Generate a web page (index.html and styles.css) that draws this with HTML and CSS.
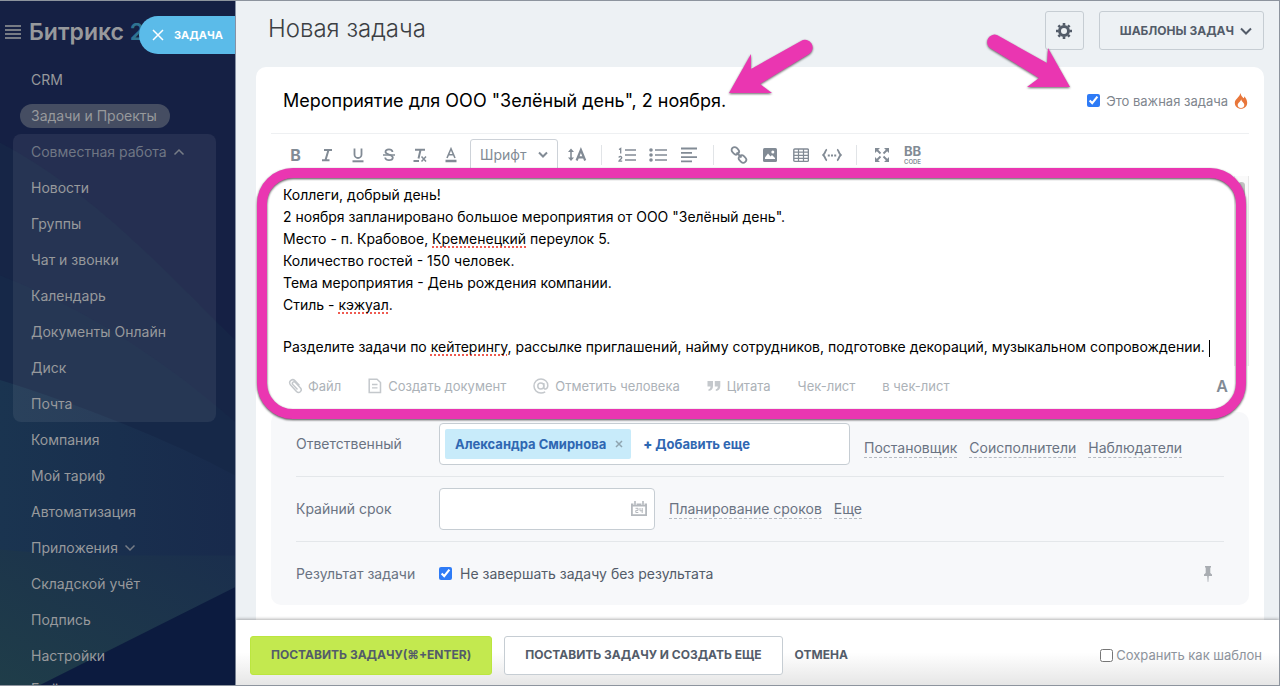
FILE: index.html
```html
<!DOCTYPE html>
<html lang="ru">
<head>
<meta charset="utf-8">
<title>Новая задача</title>
<link rel="stylesheet" href="styles.css">
</head>
<body>
<div class="app">
  <aside class="sidebar">
    <svg class="sidebar-art" viewBox="0 0 235 686" preserveAspectRatio="none" aria-hidden="true">
      <defs>
        <linearGradient id="teal" x1="0" y1="1" x2="1" y2="0"><stop offset="0" stop-color="#1f3d49"/><stop offset="1" stop-color="#1a2e4d"/></linearGradient>
        <linearGradient id="deep" x1="0" y1="0" x2="1" y2="0"><stop offset="0" stop-color="#1a3450"/><stop offset="1" stop-color="#182a4c"/></linearGradient>
      </defs>
      <rect width="235" height="686" fill="#152044"/>
      <path d="M0 142C90 190 160 265 235 340V686H0Z" fill="#162546"/>
      <path d="M0 275C90 310 170 365 235 422V686H0Z" fill="#162848"/>
      <path d="M0 380C80 405 170 440 235 476V686H0Z" fill="url(#deep)"/>
      <path d="M0 550C80 558 160 556 235 556V686H0Z" fill="url(#teal)"/>
      <path d="M235 588L40 686H235Z" fill="#0c1b3f"/>
    </svg>
    <div class="brand">
      <button class="burger" type="button" aria-label="Меню"><span></span><span></span><span></span><span></span></button>
      <span class="brand-name">Битрикс <span class="brand-num">24</span></span>
    </div>
    <nav class="menu">
      <a class="menu-item" href="#">CRM</a>
      <a class="menu-item" href="#"><span class="pill">Задачи и Проекты</span></a>
      <div class="menu-group">
        <a class="menu-item menu-head" href="#">Совместная работа <svg width="12" height="8" viewBox="0 0 12 8"><path d="M1.500 6.500L6 2L10.500 6.500"/></svg></a>
        <a class="menu-item" href="#">Новости</a>
        <a class="menu-item" href="#">Группы</a>
        <a class="menu-item" href="#">Чат и звонки</a>
        <a class="menu-item" href="#">Календарь</a>
        <a class="menu-item" href="#">Документы Онлайн</a>
        <a class="menu-item" href="#">Диск</a>
        <a class="menu-item" href="#">Почта</a>
      </div>
      <a class="menu-item" href="#">Компания</a>
      <a class="menu-item" href="#">Мой тариф</a>
      <a class="menu-item" href="#">Автоматизация</a>
      <a class="menu-item" href="#">Приложения <svg width="12" height="8" viewBox="0 0 12 8"><path d="M1.500 1.500L6 6L10.500 1.500"/></svg></a>
      <a class="menu-item" href="#">Складской учёт</a>
      <a class="menu-item" href="#">Подпись</a>
      <a class="menu-item" href="#">Настройки</a>
      <a class="menu-item menu-more" href="#">Ещё</a>
    </nav>
    <button class="slider-tab" type="button"><svg width="12" height="12" viewBox="0 0 12 12"><path d="M1 1L11 11M11 1L1 11"/></svg>ЗАДАЧА</button>
  </aside>

  <main class="main">
    <div class="scroll">
      <header class="head">
        <h1>Новая задача</h1>
        <button class="btn btn-gear" type="button" aria-label="Настройки">
          <svg width="18" height="18" viewBox="-9 -9 18 18"><circle r="4.500" fill="none" stroke="#535c69" stroke-width="3"/><path d="M0 -5.500V-8M0 5.500V8M-5.500 0H-8M5.500 0H8M-4 -4L-5.600 -5.600M4 4L5.600 5.600M-4 4L-5.600 5.600M4 -4L5.600 -5.600" stroke="#535c69" stroke-width="2.600"/></svg>
        </button>
        <button class="btn btn-templates" type="button">ШАБЛОНЫ ЗАДАЧ <svg width="12" height="8" viewBox="0 0 12 8"><path d="M1 1.500L6 6.500L11 1.500" fill="none" stroke="#535c69" stroke-width="2"/></svg></button>
      </header>

      <section class="card">
        <div class="title-row">
          <input class="title-input" type="text" aria-label="Название задачи" value='Мероприятие для ООО "Зелёный день", 2 ноября.'>
          <label class="important"><input type="checkbox" checked> Это важная задача
            <svg width="14" height="16" viewBox="0 0 14 16"><path d="M6.500 0C7 3 8.500 4 9.500 5.200C10.200 4.800 10.300 4 10.200 3.200C12 5 13.200 7.300 13.200 9.700C13.200 13.300 10.500 15.700 7 15.700S.8 13.300.8 9.700C.8 6 5.500 4.500 6.500 0Z" fill="#e8763a"/><path d="M7.200 6.200C7.300 8.500 10.300 9.300 10.300 12C10.300 14 8.800 15 7 15S3.700 14 3.700 12C3.700 9.600 6.900 8.600 7.200 6.200Z" fill="#fff"/></svg>
          </label>
        </div>

        <div class="editor">
          <div class="toolbar">
            <button class="tool" type="button" aria-label="Жирный"><b>B</b></button>
            <button class="tool" type="button" aria-label="Курсив"><svg width="16" height="16" viewBox="0 0 16 16"><path d="M5 3H13M3 13.200H10.500M9.500 3L6.500 13" fill="none" stroke-width="2"/></svg></button>
            <button class="tool" type="button" aria-label="Подчёркнутый"><svg width="16" height="16" viewBox="0 0 16 16"><path d="M4.500 1.500V7.500A3.500 3.500 0 0 0 11.500 7.500V1.500" fill="none" stroke-width="1.800"/><path d="M2.500 14.300H13.500" stroke-width="2"/></svg></button>
            <button class="tool" type="button" aria-label="Зачёркнутый"><svg width="16" height="16" viewBox="0 0 16 16"><path d="M11.500 5C11.500 1.500 4.500 1.500 4.500 5C4.500 7.500 11.800 7.500 11.800 10.500C11.800 14 4.200 14.200 4.200 10.500" fill="none" stroke-width="1.800"/><path d="M2 8H14" stroke-width="1.500"/></svg></button>
            <button class="tool" type="button" aria-label="Очистить формат"><svg width="16" height="16" viewBox="0 0 16 16"><path d="M3 2.800H13M8.500 3L6.500 11.500M1.500 14H7" fill="none" stroke-width="2"/><path d="M9.500 9.500L14 14.500M14 9.500L9.500 14.500" stroke-width="1.500"/></svg></button>
            <button class="tool" type="button" aria-label="Цвет текста"><svg width="16" height="16" viewBox="0 0 16 16"><path d="M4 11L8 1.800L12 11M5.500 7.800H10.500" fill="none" stroke-width="1.600"/><path d="M2.500 14H13.500" stroke-width="2.500"/></svg></button>
            <span class="font-box"><select class="font-select" aria-label="Шрифт"><option>Шрифт</option></select><svg width="12" height="8" viewBox="0 0 12 8"><path d="M2 1.500L6 5.500L10 1.500" fill="none" stroke-width="2"/></svg></span>
            <button class="tool" type="button" aria-label="Размер текста"><svg width="20" height="16" viewBox="0 0 20 16"><path d="M4 3.500V12.500" stroke-width="1.600"/><path d="M4 1.500L7 5H1ZM4 14L1 10.500H7Z" class="solid"/><path d="M9.600 13.500L13.900 3L18.200 13.500M11 10.300H17" fill="none" stroke-width="2.200"/></svg></button>
            <i class="sep"></i>
            <button class="tool" type="button" aria-label="Нумерованный список"><svg width="18" height="16" viewBox="0 0 18 16"><path d="M7 3H18M7 8H18M7 13H18" stroke-width="1.600"/><path d="M1 2.500L2.700 1.500V6.500M.8 10.500C1.200 9 4 9.200 3.700 10.800C3.500 12 1.300 13 1 14.200H4.200" fill="none" stroke-width="1.300"/></svg></button>
            <button class="tool" type="button" aria-label="Маркированный список"><svg width="18" height="16" viewBox="0 0 18 16"><path d="M6 3H18M6 8H18M6 13H18" stroke-width="1.600"/><g class="solid"><circle cx="2" cy="3" r="1.800"/><circle cx="2" cy="8" r="1.800"/><circle cx="2" cy="13" r="1.800"/></g></svg></button>
            <button class="tool" type="button" aria-label="Выравнивание"><svg width="16" height="16" viewBox="0 0 16 16"><path d="M0 1.500H16M0 5.800H11M0 10.100H16M0 14.400H11" stroke-width="1.800"/></svg></button>
            <i class="sep"></i>
            <button class="tool" type="button" aria-label="Ссылка"><svg width="18" height="18" viewBox="0 0 18 18"><g fill="none" stroke-width="1.800"><rect x="1.300" y="1.800" width="8" height="6" rx="3" transform="rotate(45 5.300 4.800)"/><rect x="8.500" y="10" width="8" height="6" rx="3" transform="rotate(45 12.500 13)"/><path d="M6.500 6.500L11.500 11.500"/></g></svg></button>
            <button class="tool" type="button" aria-label="Изображение"><svg width="16" height="16" viewBox="0 0 16 16"><rect class="solid" x="1" y="1" width="14" height="14" rx="1.500"/><path d="M3 12V10.500L6 6.500L8.500 9.500L10 8L13 11V12Z" fill="#fff" stroke="none"/><circle cx="10.800" cy="5" r="1.500" fill="#fff" stroke="none"/></svg></button>
            <button class="tool" type="button" aria-label="Таблица"><svg width="16" height="16" viewBox="0 0 16 16"><rect x=".8" y="2" width="14.600" height="12.400" rx="1" fill="none" stroke-width="1.400"/><path d="M1 5.200H15M1 8.300H15M1 11.400H15M5.500 2V14M10.500 2V14" stroke-width="1.200"/></svg></button>
            <button class="tool" type="button" aria-label="Код"><svg width="20" height="16" viewBox="0 0 20 16"><path d="M5 2.500C3 3 3.800 6 1.200 8C3.800 10 3 13 5 13.500M15 2.500C17 3 16.200 6 18.800 8C16.200 10 17 13 15 13.500" fill="none" stroke-width="1.800"/><path d="M5.800 8.500H7.800M9 8.500H11M12.200 8.500H14.200" stroke-width="2"/></svg></button>
            <i class="sep"></i>
            <button class="tool" type="button" aria-label="На весь экран"><svg width="16" height="16" viewBox="0 0 16 16"><path d="M3 3L6.500 6.500M13 3L9.500 6.500M3 13L6.500 9.500M13 13L9.500 9.500" stroke-width="1.800"/><path class="solid" d="M1 1H6L1 6ZM15 1V6L10 1ZM1 15V10L6 15ZM15 15H10L15 10Z"/></svg></button>
            <button class="tool bbcode" type="button"><b>BB</b><small>CODE</small></button>
          </div>

          <div class="text-frame">
            <div class="text" role="textbox" aria-multiline="true" aria-label="Описание задачи" contenteditable="true" spellcheck="false">
              <p>Коллеги, добрый день!<br>2 ноября запланировано большое мероприятия от ООО "Зелёный день".<br>Место - п. Крабовое, <span class="typo">Кременецкий</span> переулок 5.<br>Количество гостей - 150 человек.<br>Тема мероприятия - День рождения компании.<br>Стиль - <span class="typo">кэжуал</span>.</p>
              <p>Разделите задачи по <span class="typo">кейтерингу</span>, рассылке приглашений, найму сотрудников, подготовке декораций, музыкальном сопровождении.<span class="caret"></span></p>
            </div>
            <div class="track"><div class="thumb"></div></div>
          </div>

          <div class="attach">
            <button type="button"><svg width="14" height="16" viewBox="0 0 14 16"><path d="M11.500 7.500L6.800 2.600C4.500 .3 .2 3 2.200 6.500L8.500 13.500C11 16 14.800 12.800 12.500 10L7.200 4.300C5.500 2.800 3.600 4.800 4.700 6.400L9.500 11.500" fill="none" stroke-width="1.500"/></svg>Файл</button>
            <button type="button"><svg width="14" height="16" viewBox="0 0 14 16"><path d="M1.200 1.200H9L12.500 4.500V14.500H1.200Z" fill="none" stroke-width="1.500"/><path d="M4 6.500H9.500M4 9.800H9.500" stroke-width="1.300"/></svg>Создать документ</button>
            <button type="button"><svg width="16" height="16" viewBox="0 0 16 16"><g fill="none" stroke-width="1.500"><circle cx="7.800" cy="8" r="3"/><path d="M10.800 5V9.500C10.800 12 14.800 11.500 14.800 7.500C14.800 3.500 11.500 1 8 1C4 1 1 4 1 8C1 12 4 15 8 15C9.800 15 11 14.600 12.200 13.900"/></g></svg>Отметить человека</button>
            <button type="button"><svg width="14" height="16" viewBox="0 0 14 16"><path class="solid" d="M.5 3H6V8C6 11 4.500 12.800 1.500 13V11.200C3 11 3.500 10 3.500 8.500H.5ZM7.800 3H13.300V8C13.300 11 11.800 12.800 8.800 13V11.200C10.300 11 10.800 10 10.800 8.500H7.800Z"/></svg>Цитата</button>
            <button type="button">Чек-лист</button>
            <button type="button">в чек-лист</button>
            <button type="button" class="letter">A</button>
          </div>
          <div class="highlight"></div>
        </div>

        <div class="fields">
          <div class="row">
            <span class="row-label">Ответственный</span>
            <div class="people">
              <span class="person">Александра Смирнова <button type="button" aria-label="Убрать"><svg width="8" height="8" viewBox="0 0 8 8"><path d="M1 1L7 7M7 1L1 7"/></svg></button></span>
              <button class="add" type="button"><b>+</b> Добавить еще</button>
            </div>
            <div class="links links-low"><a href="#">Постановщик</a><a href="#">Соисполнители</a><a href="#">Наблюдатели</a></div>
          </div>
          <div class="row">
            <label class="row-label" for="deadline">Крайний срок</label>
            <div class="date">
              <input id="deadline" type="text">
              <svg width="16" height="16" viewBox="0 0 16 16"><path d="M0 2.500H16V15H0ZM1.800 5.500V13.300H14.200V5.500Z" fill="#b4b8bd" fill-rule="evenodd"/><path d="M4 .5V4M12 .5V4" stroke="#fff" stroke-width="3"/><path d="M4 0V4M12 0V4" stroke="#b4b8bd" stroke-width="1.600"/><path d="M4.500 7.300H7V9.400H4.800V11.500H7.300M9 7V9.800H11.700M11.200 7V12" fill="none" stroke="#b4b8bd"/></svg>
            </div>
            <div class="links"><a href="#">Планирование сроков</a><a href="#">Еще</a></div>
          </div>
          <div class="row">
            <span class="row-label">Результат задачи</span>
            <label class="result"><input type="checkbox" checked> Не завершать задачу без результата</label>
            <button class="pin" type="button" aria-label="Закрепить"><svg width="8" height="16" viewBox="0 0 8 16"><path d="M1 0H7V1.500H6.300V7L8 8.500V10H4.800L4.300 16H3.700L3.200 10H0V8.500L1.700 7V1.500H1Z" fill="#a9adb2"/></svg></button>
          </div>
        </div>
      </section>
    </div>

    <footer class="footer">
      <button class="btn btn-primary" type="button">ПОСТАВИТЬ ЗАДАЧУ(⌘+ENTER)</button>
      <button class="btn btn-second" type="button">ПОСТАВИТЬ ЗАДАЧУ И СОЗДАТЬ ЕЩЕ</button>
      <button class="btn-link" type="button">ОТМЕНА</button>
      <label class="save"><input type="checkbox"> Сохранить как шаблон</label>
    </footer>

    <svg class="arrow arrow-title" width="90" height="60" viewBox="0 0 90 60" aria-hidden="true"><path d="M2 55L24 16L24 31L74 3A7.500 7.500 0 0 1 82 16L33 46L45 55Z"/></svg>
    <svg class="arrow arrow-check" width="90" height="60" viewBox="0 0 90 60" aria-hidden="true"><path d="M85 55L63 16L62 31L12 3A7.500 7.500 0 0 0 5 16L54 46L42 55Z"/></svg>
  </main>
</div>
</body>
</html>
```
FILE: styles.css
```css
* { box-sizing: border-box; }

body {
  margin: 0;
  font: 14px/20px Inter, "Open Sans", "DejaVu Sans", sans-serif;
  color: #535c69;
}

button { font: inherit; color: inherit; background: none; border: 0; padding: 0; }
a { color: inherit; text-decoration: none; }
svg { flex: none; }

.app { display: flex; height: 100vh; border: solid #8d949e; border-width: 1px 1px 1px 0; overflow: hidden; }

/* sidebar */
.sidebar { position: relative; flex: 0 0 236px; overflow: hidden; color: #97999c; border-right: 1px solid #8792a5; }
.sidebar-art { position: absolute; inset: 0; width: 100%; height: 100%; }
.brand { position: relative; display: flex; align-items: center; gap: 8px; height: 61px; padding-left: 5px; }
.burger { display: flex; flex-direction: column; gap: 2px; width: 16px; }
.burger span { height: 2px; background: #777b84; }
.brand-name { font-size: 23px; line-height: 28px; font-weight: 600; white-space: nowrap; }
.brand-num { color: #2f7391; }
.menu { position: relative; font-size: 14px; }
.menu-item { display: flex; align-items: center; gap: 6px; height: 36px; padding-left: 31px; white-space: nowrap; }
.menu-item svg { fill: none; stroke: #777d87; stroke-width: 1.5; }
.menu-more { height: 30px; }
.pill { margin-left: -11px; padding: 2px 13px 2px 11px; border-radius: 13px; background: #454d62; }
.menu-group { margin: 0 19px 0 13px; border-radius: 8px; background: rgba(255, 255, 255, .07); }
.menu-group .menu-item { padding-left: 18px; }
.menu-head { color: #6f7684; }
.slider-tab {
  position: absolute; top: 15px; right: 0;
  display: flex; align-items: center; gap: 10px;
  height: 38px; padding: 0 12px 0 13px;
  border-radius: 19px 0 0 19px; background: #5bbbe9;
  color: #fff; font-size: 11px; font-weight: 700;
}
.slider-tab svg { fill: none; stroke: #fff; stroke-width: 1.5; }

/* main */
.main { position: relative; flex: 1; min-width: 0; display: flex; flex-direction: column; background: #edf1f4; }
.scroll { flex: 1; min-height: 0; overflow: hidden; padding: 0 15px 0 20px; }
.head { display: flex; align-items: center; gap: 15px; height: 66px; padding: 0 0 7px 12px; }
.head h1 { flex: 1; margin: 0; font-size: 24px; line-height: 30px; font-weight: 300; color: #3c3f43; padding-bottom: 4px; }
.btn { display: flex; align-items: center; justify-content: center; height: 39px; border: 1px solid #c6cdd3; border-radius: 3px; font-size: 12px; font-weight: 700; white-space: nowrap; }
.btn-gear { width: 39px; }
.btn-templates { gap: 6px; padding: 0 11px 0 20px; }

.card { height: 700px; padding: 0 15px; border-radius: 10px; background: #fff; }
.title-row { display: flex; align-items: center; height: 67px; padding: 1px 1px 0 12px; border-bottom: 1px solid #eef0f2; }
.title-input { flex: 1; min-width: 0; padding: 0; border: 0; outline: 0; background: none; font: 18px/24px Inter, sans-serif; color: #000; }
input[type="checkbox"] { width: 13px; height: 13px; margin: 0; accent-color: #2e7bf6; }
.important { display: flex; align-items: center; gap: 6px; font-size: 13px; color: #80868e; white-space: nowrap; }

/* editor */
.editor { position: relative; height: 278px; }
.toolbar { display: flex; align-items: center; height: 42px; padding-left: 9px; color: #828b95; }
.tool { display: flex; align-items: center; justify-content: center; width: 31px; height: 30px; font-size: 16px; }
.toolbar svg, .attach svg { stroke: currentColor; fill: none; }
.toolbar .solid, .attach .solid { fill: currentColor; stroke: none; }
.sep { width: 1px; height: 20px; margin: 0 9px; background: #e1e4e7; }
.font-box { position: relative; width: 88px; margin: 0 3px 0 4px; }
.font-select { display: block; appearance: none; width: 100%; height: 32px; padding: 0 9px; border: 1px solid #cdd2d8; border-radius: 3px; background: #fff; color: #828b95; font: 14px/20px Inter, sans-serif; }
.font-box svg { position: absolute; right: 9px; top: 12px; }
.bbcode { flex-direction: column; font-size: 13px; line-height: 13px; }
.bbcode small { font-size: 6px; line-height: 7px; font-weight: 600; }
.text-frame { display: flex; height: 190px; }
.text { flex: 1; min-width: 0; padding: 8px 0 0 12px; outline: 0; color: #000; line-height: 22px; }
.text p { margin: 0 0 20px; white-space: nowrap; }
.typo { text-decoration: underline dotted #ef5a50 2px; text-underline-offset: 2px; text-decoration-skip-ink: none; }
.caret { display: inline-block; width: 1px; height: 17px; margin-left: 4px; vertical-align: middle; background: #000; }
.track { width: 15px; padding: 6px 3px; border: solid #e8e8e8; border-width: 0 1px; background: #fafafa; }
.thumb { height: 120px; border-radius: 4px; background: #c1c1c1; }
.attach { display: flex; align-items: center; gap: 27px; padding: 10px 21px 0 17px; height: 30px; font-size: 13px; color: #acb2b8; }
.attach button { display: flex; align-items: center; gap: 6px; white-space: nowrap; }
.attach svg { color: #c4c8cc; }
.attach .letter { margin-left: auto; font-size: 16px; font-weight: 600; color: #828b95; }
.highlight { position: absolute; inset: 34px 3px -7px -14px; border: 10px solid #ea36b1; border-radius: 36px; filter: drop-shadow(0 1px 1px rgba(0, 0, 0, .7)); pointer-events: none; }

/* fields */
.fields { padding: 0 25px; border-radius: 10px; background: #f7f8fa; }
.row { display: flex; align-items: center; height: 65px; border-bottom: 1px solid #e4e7ea; }
.row:last-child { height: 63px; border-bottom: 0; }
.row-label { flex: 0 0 143px; color: #6a7382; }
.people { flex: 0 1 411px; display: flex; align-items: center; gap: 12px; height: 42px; padding: 0 5px; border: 1px solid #c6cdd3; border-radius: 4px; background: #fff; font-size: 13px; font-weight: 700; color: #2f67b2; white-space: nowrap; }
.person { display: flex; align-items: center; gap: 9px; height: 30px; padding: 0 8px 0 10px; border-radius: 2px; background: #c8ebfa; }
.person button { display: flex; }
.person svg { stroke: #8fa5b0; stroke-width: 1.5; }
.links { display: flex; gap: 12px; margin-left: 14px; color: #6a7382; white-space: nowrap; }
.links-low { padding-top: 8px; }
.links a { line-height: 18px; border-bottom: 1px dashed #b5bac2; }
.date { position: relative; flex: 0 1 216px; }
.date input { display: block; width: 100%; height: 42px; border: 1px solid #c6cdd3; border-radius: 4px; background: #fff; font: inherit; }
.date svg { position: absolute; right: 8px; top: 13px; }
.result { display: flex; align-items: center; gap: 8px; }
.pin { display: flex; margin-left: auto; margin-right: 12px; }

/* footer */
.footer { position: relative; display: flex; align-items: center; gap: 12px; height: 65px; padding: 5px 17px 0 14px; background: linear-gradient(#fff 50%, #e6e6e6); box-shadow: 0 -1px 3px rgba(0, 0, 0, .3); }
.btn-primary { padding: 0 20px; border-color: #bbe63f; background: #c3e94f; }
.btn-second { padding: 0 20px; background: #fff; }
.btn-link { font-size: 12px; font-weight: 700; }
.save { display: flex; align-items: center; gap: 3px; margin-left: auto; font-size: 13px; color: #8d939c; white-space: nowrap; }

.arrow { position: absolute; fill: #ea36b1; filter: drop-shadow(0 1px 1px rgba(0, 0, 0, .6)); pointer-events: none; }
.arrow-title { left: 491px; top: 37px; }
.arrow-check { left: 749px; top: 31px; }
```
